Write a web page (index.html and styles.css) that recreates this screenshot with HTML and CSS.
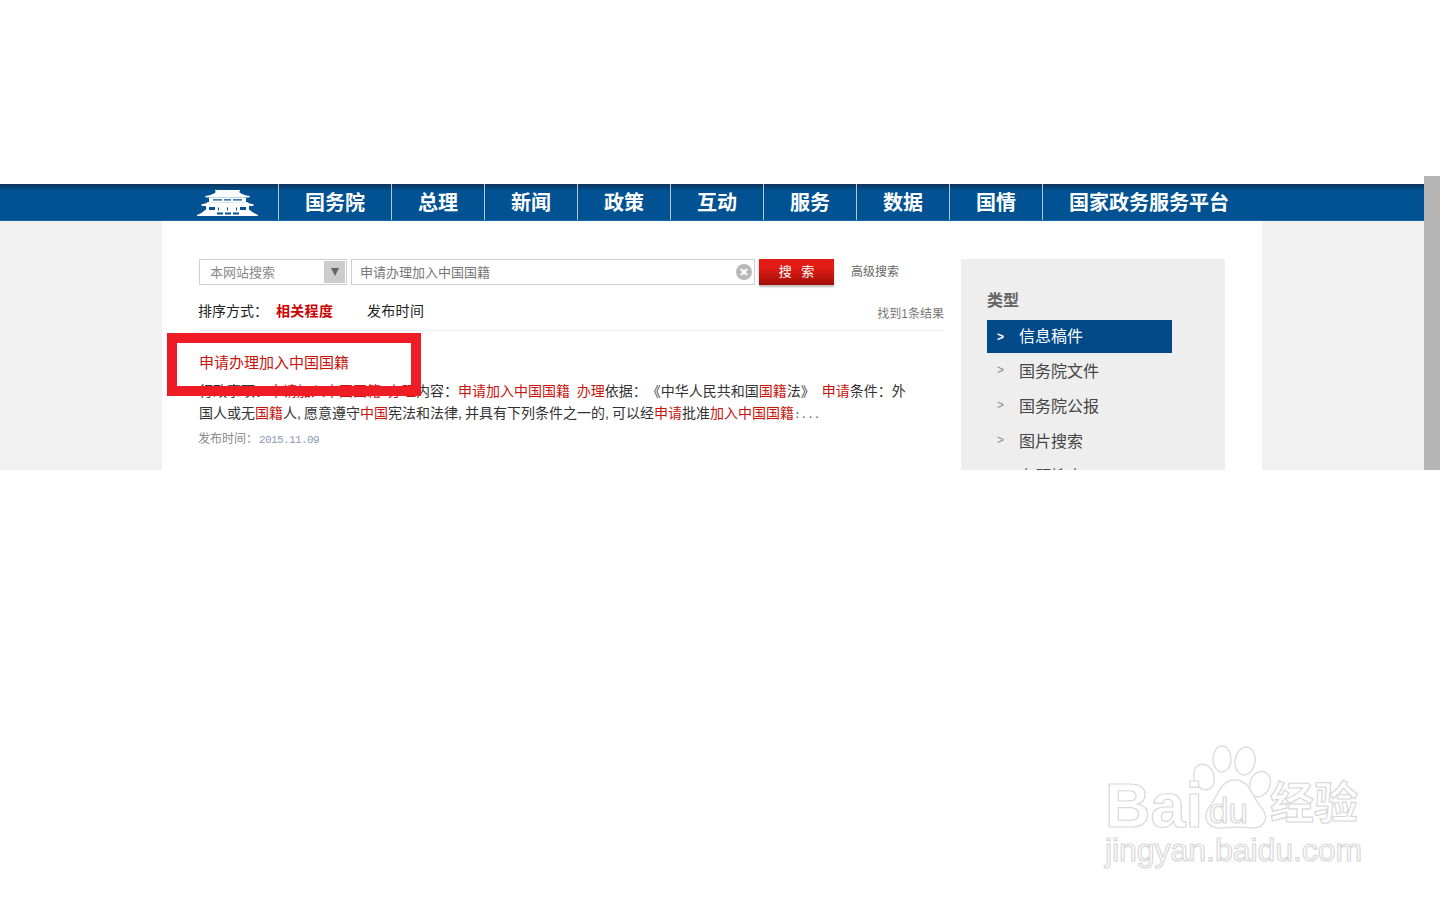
FILE: index.html

```html
<!DOCTYPE html>
<html lang="zh-CN">
<head>
  <meta charset="UTF-8" />
  <meta name="viewport" content="width=device-width, initial-scale=1.0"/>
  <title>搜索结果</title>
  <link rel="stylesheet" href="styles.css">
</head>
<body>

  <div class="capture">
    <div class="page">
      <nav class="nav-bar">
        <div class="nav-inner">
          <div class="nav-logo">
            <svg width="61" height="27" viewBox="0 0 61 27" fill="#fff">
              <path d="M18 1h25v1.500h-1.500C44 5 48 6.500 53 7L52 8.500H9L8 7C13 6.500 17 5 19.500 2.500H18z"/>
              <path d="M12 8.500h37v5H12z"/>
              <path d="M11 13c1 .5 38 .5 39 0 1.500 1 4 2 7 2.500L56 17H5l-1-1.500C7 15 9.500 14 11 13z"/>
              <path d="M9 17h43v4H9z"/>
              <path d="M8 21h45c2 2 5 4 8 5v1H0v-1c3-1 6-3 8-5z"/>
              <path fill="#005293" d="M16 10.200h9v1.300h-9zM27 10.200h7v1.300h-7zM36 10.200h9v1.300h-9zM12 18h6v3h-6zM43 18h6v3h-6zM21 18.500h1v3h-1zM30 18.500h1v3h-1zM39 18.500h1v3h-1zM20 23.500h6v2h-6zM28 23.500h6v2h-6zM36 23.500h6v2h-6z"/>
            </svg>
          </div>
          <a class="nav-item">国务院</a>
          <a class="nav-item">总理</a>
          <a class="nav-item">新闻</a>
          <a class="nav-item">政策</a>
          <a class="nav-item">互动</a>
          <a class="nav-item">服务</a>
          <a class="nav-item">数据</a>
          <a class="nav-item">国情</a>
          <a class="nav-item">国家政务服务平台</a>
        </div>
      </nav>

      <div class="content">
        <div class="results">
          <div class="search-row">
            <div class="scope">
              <span class="field-text">本网站搜索</span>
              <span class="scope-arrow"></span>
            </div>
            <div class="query">
              <span class="field-text">申请办理加入中国国籍</span>
              <svg width="16" height="16" viewBox="0 0 16 16">
                <circle cx="8" cy="8" r="8" fill="#b9b9b9"/>
                <path d="M5 5l6 6M11 5l-6 6" stroke="#fff" stroke-width="2.400"/>
              </svg>
            </div>
            <div class="search-btn">搜 索</div>
            <a class="advanced">高级搜索</a>
          </div>

          <div class="sort-row">
            <span class="sort-label">排序方式：</span>
            <a class="sort-active">相关程度</a>
            <a class="sort-link">发布时间</a>
            <span class="count">找到1条结果</span>
          </div>

          <div class="result">
            <a class="result-title">申请办理加入中国国籍</a>
            <p class="result-text"><span class="line-wide">行政事项：<em>申请加入中国国籍</em> <em>办理</em>内容：<em>申请加入中国国籍</em> <em>办理</em>依据：《中华人民共和国<em>国籍</em>法》 <em>申请</em>条件：外</span><br><span class="line-tight">国人或无<em>国籍</em>人, 愿意遵守<em>中国</em>宪法和法律, 并具有下列条件之一的, 可以经<em>申请</em>批准<em>加入中国国籍</em><span class="dots">:...</span></span></p>
            <div class="result-date">发布时间：<span>2015. 11. 09</span></div>
          </div>
        </div>

        <aside class="sidebar">
          <h3>类型</h3>
          <ul>
            <li class="active">信息稿件</li>
            <li>国务院文件</li>
            <li>国务院公报</li>
            <li>图片搜索</li>
            <li>专题搜索</li>
          </ul>
        </aside>
      </div>
    </div>
    <div class="scrollbar"></div>
  </div>

  <!-- annotation drawn over the screenshot -->
  <div class="red-box"></div>

  <div class="watermark">
    <svg width="290" height="150" viewBox="0 0 290 150" fill="#fff" stroke="#dedede" stroke-width="1.500">
      <ellipse cx="114" cy="47" rx="10" ry="13" transform="rotate(-20 114 47)"/>
      <ellipse cx="132" cy="29" rx="9" ry="13"/>
      <ellipse cx="155" cy="31" rx="10" ry="14" transform="rotate(10 155 31)"/>
      <ellipse cx="170" cy="54" rx="10" ry="13" transform="rotate(20 170 54)"/>
      <path d="M145 50C130 50 128 66 120 76 112 86 116 98 130 98 138 98 152 96 162 98 176 98 180 86 170 76 162 66 160 50 145 50Z"/>
    </svg>
    <span class="wm-bai">Bai</span>
    <span class="wm-du">du</span>
    <span class="wm-cn">经验</span>
    <span class="wm-url">jingyan.baidu.com</span>
  </div>

</body>
</html>
```

FILE: styles.css

```css
body {
  font-family: "Liberation Sans", "Noto Sans CJK SC", sans-serif;
  margin: 0;
  padding: 0;
  height: 900px;
  background-color: #fff;
  color: #333;
  overflow: hidden;
  position: relative;
  text-spacing-trim: space-all;
}

a {
  text-decoration: none;
}

.capture {
  display: flex;
  margin-top: 176px;
  height: 294px;
  overflow: hidden;
}

.page {
  flex: 1;
  padding-top: 8px;
  background-color: #f1f1f1;
  background-image: linear-gradient(#fff, #fff);
  background-size: 100% 8px;
  background-repeat: no-repeat;
}

.scrollbar {
  width: 16px;
  background-color: #b5b5b5;
}

/* nav */
.nav-bar {
  height: 37px;
  background: linear-gradient(#10335a 0, #00508f 6px, #005293 8px);
  border-bottom: 1px solid #1a66a5;
  box-sizing: border-box;
}

.nav-inner {
  display: flex;
  width: 1100px;
  height: 36px;
  margin: 0 auto;
}

.nav-logo {
  width: 116px;
  padding: 5px 0 0 35px;
  box-sizing: border-box;
}

.nav-item {
  padding: 0 26px;
  border-left: 1px solid #b9c6d2;
  color: #fff;
  font-size: 20px;
  font-weight: bold;
  line-height: 38px;
}

/* main area */
.content {
  display: flex;
  width: 1100px;
  height: 249px;
  margin: 0 auto;
  padding: 38px 37px 0 36px;
  box-sizing: border-box;
  background-color: #fff;
}

.results {
  width: 746px;
}

.search-row {
  display: flex;
  align-items: flex-start;
  margin-left: 1px;
}

.scope {
  display: flex;
  justify-content: space-between;
  align-items: center;
  width: 148px;
  height: 26px;
  padding: 0 1px 0 10px;
  border: 1px solid #ccced6;
  box-sizing: border-box;
  color: #888;
  font-size: 13px;
}

.field-text {
  position: relative;
  top: -1px;
}

.scope-arrow {
  width: 21px;
  height: 22px;
  background-color: #ccc;
  position: relative;
}

.scope-arrow::after {
  content: "";
  position: absolute;
  top: 7px;
  left: 7px;
  border-top: 8px solid #666;
  border-left: 4px solid transparent;
  border-right: 4px solid transparent;
}

.query {
  display: flex;
  justify-content: space-between;
  align-items: center;
  width: 404px;
  height: 26px;
  margin-left: 4px;
  padding: 0 2px 0 8px;
  border: 1px solid #ccced6;
  box-sizing: border-box;
  color: #777;
  font-size: 13px;
}

.search-btn {
  width: 75px;
  height: 26px;
  margin-left: 4px;
  background: linear-gradient(#e51c16 30%, #a01008);
  box-shadow: 0 2px 2px #bbb;
  color: #fff;
  font-size: 13px;
  line-height: 26px;
  text-align: center;
  word-spacing: 6px;
}

.advanced {
  margin-left: 17px;
  color: #666;
  font-size: 12px;
  line-height: 27px;
}

.sort-row {
  display: flex;
  align-items: center;
  height: 45px;
  padding-top: 4px;
  box-sizing: border-box;
  border-bottom: 1px solid #eee;
  font-size: 14px;
  color: #222;
}

.sort-label {
  width: 78px;
}

.sort-active {
  width: 91px;
  color: #c00;
  font-weight: bold;
  letter-spacing: 0.3px;
}

.sort-link {
  color: #222;
  letter-spacing: 0.3px;
}

.count {
  margin-left: auto;
  margin-top: 4px;
  color: #777;
  font-size: 12px;
}

.result {
  padding: 22px 0 0 1px;
}

.result-title {
  display: block;
  color: #c8120c;
  font-size: 15px;
  line-height: 20px;
}

.result-text {
  margin: 7px 0 0;
  font-size: 14px;
  line-height: 22px;
}

.result-text em {
  color: #c8120c;
  font-style: normal;
}

.line-wide {
  word-spacing: 3px;
}

.line-tight {
  word-spacing: -0.800px;
}

.dots {
  font-family: "Liberation Mono", monospace;
  font-size: 11px;
  color: #555;
}

.result-date {
  margin-top: 3px;
  margin-left: -1px;
  color: #888;
  font-size: 12px;
  line-height: 20px;
}

.result-date span {
  margin-left: 1px;
  color: #8a9bb5;
  font-family: "Liberation Mono", monospace;
  font-size: 11px;
  letter-spacing: -0.600px;
  word-spacing: -6px;
}

/* sidebar */
.sidebar {
  width: 264px;
  height: 300px;
  margin-left: 17px;
  padding: 30px 0 0 26px;
  box-sizing: border-box;
  background-color: #eee;
}

.sidebar h3 {
  margin: 0 0 7px;
  color: #666;
  font-size: 16px;
  line-height: 24px;
}

.sidebar ul {
  margin: 0;
  padding: 0;
  list-style: none;
}

.sidebar li {
  position: relative;
  width: 185px;
  height: 33px;
  margin-bottom: 2px;
  padding-left: 32px;
  box-sizing: border-box;
  color: #444;
  font-size: 16px;
  line-height: 33px;
}

.sidebar li::before {
  content: ">";
  position: absolute;
  left: 10px;
  top: -1px;
  color: #888;
  font-size: 12px;
}

.sidebar li.active {
  background-color: #004a8a;
  color: #fff;
}

.sidebar li.active::before {
  color: #fff;
  font-weight: bold;
  top: 1px;
}

/* overlays */
.red-box {
  position: absolute;
  left: 167px;
  top: 333px;
  width: 254px;
  height: 63px;
  border: 10px solid #ee1c25;
  box-sizing: border-box;
}

.watermark {
  position: absolute;
  left: 1090px;
  top: 730px;
  width: 290px;
  height: 150px;
}

.watermark svg {
  position: absolute;
  left: 0;
  top: 0;
}

.watermark span {
  position: absolute;
  color: #fff;
  font-family: "Liberation Sans", "Noto Sans CJK SC", sans-serif;
  -webkit-text-stroke: 1.200px #d8d8d8;
  line-height: 1;
}

.watermark .wm-bai {
  left: 15px;
  top: 51px;
  font-size: 63px;
  font-weight: bold;
  line-height: 49px;
}

.wm-du {
  left: 119px;
  top: 63px;
  font-size: 35px;
}

.wm-cn {
  left: 180px;
  top: 52px;
  font-size: 44px;
  font-weight: bold;
}

.wm-url {
  left: 15px;
  top: 104px;
  font-size: 32px;
  letter-spacing: -0.050px;
}
```
